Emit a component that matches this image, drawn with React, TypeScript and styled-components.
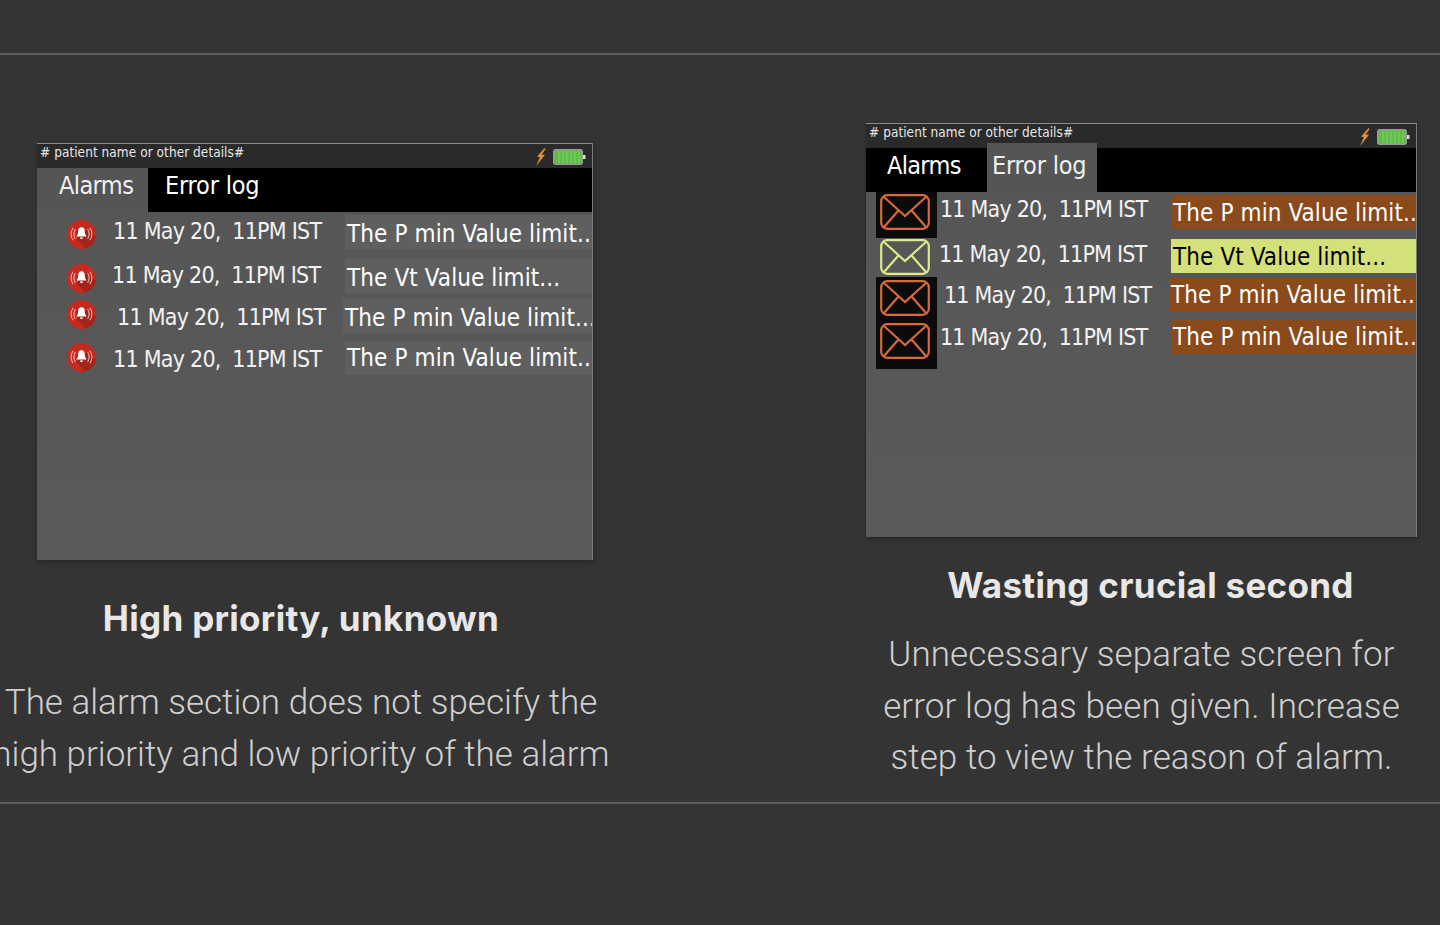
import styled, { createGlobalStyle } from 'styled-components';

const GlobalStyle = createGlobalStyle`
  html, body {
    margin: 0;
    padding: 0;
    background: #343434;
  }
  * {
    box-sizing: border-box;
  }
`;

const Page = styled.div`
  width: 1440px;
  height: 925px;
  overflow: hidden;
  background: #343434;
  padding-top: 53px;
`;

const Section = styled.div`
  height: 751px;
  border-top: 2px solid #5c5c5c;
  border-bottom: 2px solid #5c5c5c;
  display: flex;
  align-items: flex-start;
`;

const Column = styled.div<{ $top: number; $left: number; $width: number }>`
  flex: none;
  width: ${(p) => p.$width}px;
  margin-top: ${(p) => p.$top}px;
  margin-left: ${(p) => p.$left}px;
`;

const Screen = styled.div<{ $height: number }>`
  width: 100%;
  height: ${(p) => p.$height}px;
  background: linear-gradient(180deg, #555 0%, #5a5a5a 100%);
  border-top: 1px solid #8b8b8b;
  border-right: 1px solid #7d7d7d;
  box-shadow: 1px 2px 5px rgba(0, 0, 0, 0.3);
  overflow: hidden;
`;

const StatusBar = styled.div`
  height: 24px;
  background: #2a2a2a;
  display: flex;
  justify-content: space-between;
  padding: 0 6px 0 3px;
  font-family: 'DejaVu Sans Condensed', 'DejaVu Sans', sans-serif;
  font-size: 13.5px;
  line-height: 17px;
  letter-spacing: 0.05px;
  color: #e6e6e6;
`;

const StatusIcons = styled.div`
  display: flex;
  align-items: center;
  gap: 7px;
  padding-top: 2px;
`;

const TabBar = styled.div<{ $lineHeight: number }>`
  height: 44px;
  background: #000;
  display: flex;
  font-family: 'DejaVu Sans Condensed', 'DejaVu Sans', sans-serif;
  font-size: 25px;
  line-height: ${(p) => p.$lineHeight}px;
`;

const Tab = styled.div<{ $active?: boolean; $width: number; $pad: number; $lift?: number; $track: number }>`
  width: ${(p) => p.$width}px;
  padding-left: ${(p) => p.$pad}px;
  color: ${(p) => (p.$active ? '#f0f0f0' : '#fff')};
  background: ${(p) => (p.$active ? '#555' : '#000')};
  ${(p) => (p.$lift ? `margin-top: -${p.$lift}px; padding-top: ${p.$lift}px; height: ${44 + p.$lift}px;` : '')}
  letter-spacing: ${(p) => p.$track}px;
`;

const Row = styled.div<{ $top: number }>`
  display: flex;
  align-items: flex-start;
  height: 34px;
  margin-top: ${(p) => p.$top}px;
  font-family: 'DejaVu Sans Condensed', 'DejaVu Sans', sans-serif;
`;

const BellCell = styled.div<{ $top: number }>`
  flex: none;
  width: 32px;
  margin-left: 28px;
  margin-top: ${(p) => p.$top}px;
  display: flex;
  justify-content: center;
`;

const MailCell = styled.div<{ $top: number; $height: number; $pad: number; $dark: boolean }>`
  flex: none;
  width: 61px;
  margin-left: 10px;
  margin-top: ${(p) => p.$top}px;
  height: ${(p) => p.$height}px;
  padding: ${(p) => p.$pad}px 0 0 4px;
  background: ${(p) => (p.$dark ? '#0b0b0b' : 'transparent')};
  display: flex;
  align-items: flex-start;
`;

const When = styled.div<{ $pad: number; $up: number; $width: number; $track: number }>`
  flex: none;
  width: ${(p) => p.$width}px;
  padding-left: ${(p) => p.$pad}px;
  margin-top: ${(p) => p.$up}px;
  font-size: 23px;
  line-height: 30px;
  color: #f2f2f2;
  white-space: pre;
  letter-spacing: ${(p) => p.$track}px;
`;

const Message = styled.div<{ $tone: 'grey' | 'brown' | 'lime'; $line: number }>`
  flex: 1;
  min-width: 0;
  height: 34px;
  padding-left: 2px;
  font-size: 24px;
  line-height: ${(p) => p.$line}px;
  white-space: nowrap;
  overflow: hidden;
  letter-spacing: 0.1px;
  color: ${(p) => (p.$tone === 'lime' ? '#000' : '#fff')};
  background: ${(p) =>
    p.$tone === 'brown' ? '#8a4a1c' : p.$tone === 'lime' ? '#d4e07a' : '#5f5f5f'};
`;

const Caption = styled.div<{ $shift: number }>`
  display: flex;
  flex-direction: column;
  align-items: center;
  margin-left: ${(p) => p.$shift}px;
`;

const Heading = styled.h2<{ $top: number; $inset: number }>`
  margin: ${(p) => p.$top}px 0 0;
  padding-left: ${(p) => p.$inset}px;
  font-family: 'Inter', sans-serif;
  font-weight: 700;
  font-size: 35px;
  line-height: 44px;
  letter-spacing: 0.3px;
  color: #e8e8e8;
  white-space: nowrap;
`;

const Body = styled.p<{ $top: number; $track: number }>`
  margin: ${(p) => p.$top}px 0 0;
  text-align: center;
  font-family: 'Roboto', sans-serif;
  font-weight: 300;
  font-size: 35px;
  line-height: 51.5px;
  letter-spacing: ${(p) => p.$track}px;
  color: #cfcfcf;
  white-space: nowrap;
`;

function Bolt() {
  return (
    <svg width="11" height="18" viewBox="0 0 11 18">
      <path d="M9.5 0 2 8.8l3 .2L1 18l9-11.2-3.4-.1L10.5 1z" fill="#e2913a" />
    </svg>
  );
}

function Battery() {
  return (
    <svg width="33" height="16" viewBox="0 0 33 16">
      <rect x="0.75" y="0.75" width="28.5" height="14.5" rx="2" fill="#5fbe45" stroke="#9a9a9a" strokeWidth="1.5" />
      <path d="M6 2v12M10 2v12M14 2v12M18 2v12M22 2v12M26 2v12" stroke="#82d068" strokeWidth="1" />
      <rect x="30" y="6" width="2.5" height="4" fill="#ddd" />
    </svg>
  );
}

function BellBadge() {
  return (
    <svg width="29" height="29" viewBox="0 0 30 30">
      <circle cx="15" cy="15" r="15" fill="#c42a20" />
      <path d="M10 20 21 9l8.6 8.6A15 15 0 0 1 19 29.5z" fill="#a32519" />
      <path
        d="M15 7.5c-2.4 0-3.4 2-3.4 4.2 0 2.4-.7 4-1.9 5.3h10.6c-1.2-1.3-1.9-2.9-1.9-5.3 0-2.2-1-4.2-3.4-4.2z"
        fill="#fff"
      />
      <path d="M13.4 18h3.2a1.6 1.6 0 0 1-3.2 0z" fill="#fff" />
      <path
        d="M8.6 9.5c-2 3-2 7 0 10M6.4 8c-2.8 4-2.8 9 0 13M21.4 9.5c2 3 2 7 0 10M23.6 8c2.8 4 2.8 9 0 13"
        fill="none"
        stroke="#f3d0cc"
        strokeWidth="1"
      />
    </svg>
  );
}

function Envelope({ color }: { color: string }) {
  return (
    <svg width="50" height="36" viewBox="0 0 50 36">
      <rect x="1.2" y="1.2" width="47.6" height="33.6" rx="6" fill="none" stroke={color} strokeWidth="2.2" />
      <path
        d="M4 3 25 22 46 3M4 33 18 17M46 33 32 17"
        fill="none"
        stroke={color}
        strokeWidth="2.2"
      />
    </svg>
  );
}

const alarmRows = [
  { top: 3, icon: 5, pad: 16, up: 1, block: 248, line: 38, text: 'The P min Value limit...' },
  { top: 10, icon: 5, pad: 15, up: 1, block: 248, line: 38, text: 'The Vt Value limit...' },
  { top: 6, icon: 1, pad: 20, up: 3, block: 246, line: 38, text: 'The P min Value limit...' },
  { top: 8, icon: 2, pad: 16, up: 3, block: 248, line: 35, text: 'The P min Value limit...' },
];

const errorRows = [
  { top: 3, cell: -3, height: 46, env: 2, tone: 'brown', up: -1, pad: 3, block: 234, line: 37, text: 'The P min Value limit...' },
  { top: 10, cell: 0, height: 36, env: 0, tone: 'lime', up: 0, pad: 2, block: 234, line: 37, text: 'The Vt Value limit...' },
  { top: 5, cell: -1, height: 43, env: 3, tone: 'brown', up: 2, pad: 7, block: 232, line: 35, text: 'The P min Value limit...' },
  { top: 8, cell: 0, height: 49, env: 3, tone: 'brown', up: 2, pad: 3, block: 234, line: 35, text: 'The P min Value limit...' },
] as const;

export default function App() {
  return (
    <Page>
      <GlobalStyle />
      <Section>
        <Column $top={88} $left={37} $width={556}>
          <Screen $height={417}>
            <StatusBar>
              # patient name or other details#
              <StatusIcons>
                <Bolt />
                <Battery />
              </StatusIcons>
            </StatusBar>
            <TabBar $lineHeight={36}>
              <Tab $active $width={111} $pad={22} $track={-0.6}>Alarms</Tab>
              <Tab $width={200} $pad={17} $track={-0.2}>Error log</Tab>
            </TabBar>
            {alarmRows.map((row, i) => (
              <Row key={i} $top={row.top}>
                <BellCell $top={row.icon}>
                  <BellBadge />
                </BellCell>
                <When $pad={row.pad} $up={row.up} $width={row.block} $track={-0.75}>11 May 20,  11PM IST</When>
                <Message $tone="grey" $line={row.line}>{row.text}</Message>
              </Row>
            ))}
          </Screen>
          <Caption $shift={-28}>
            <Heading $top={36} $inset={0}>High priority, unknown</Heading>
            <Body $top={37} $track={0}>
              The alarm section does not specify the
              <br />
              high priority and low priority of the alarm
            </Body>
          </Caption>
        </Column>
        <Column $top={68} $left={273} $width={551}>
          <Screen $height={414}>
            <StatusBar>
              # patient name or other details#
              <StatusIcons>
                <Bolt />
                <Battery />
              </StatusIcons>
            </StatusBar>
            <TabBar $lineHeight={35}>
              <Tab $width={121} $pad={21} $track={-0.7}>Alarms</Tab>
              <Tab $active $width={110} $pad={5} $lift={5} $track={-0.2}>Error log</Tab>
            </TabBar>
            {errorRows.map((row, i) => (
              <Row key={i} $top={row.top}>
                <MailCell $top={row.cell} $height={row.height} $pad={row.env} $dark={row.tone === 'brown'}>
                  <Envelope color={row.tone === 'lime' ? '#d9ec8c' : '#d8693a'} />
                </MailCell>
                <When $pad={row.pad} $up={row.up} $width={row.block} $track={-0.8}>11 May 20,  11PM IST</When>
                <Message $tone={row.tone} $line={row.line}>{row.text}</Message>
              </Row>
            ))}
          </Screen>
          <Caption $shift={0}>
            <Heading $top={26} $inset={18}>Wasting crucial second</Heading>
            <Body $top={22} $track={0.1}>
              Unnecessary separate screen for
              <br />
              error log has been given. Increase
              <br />
              step to view the reason of alarm.
            </Body>
          </Caption>
        </Column>
      </Section>
    </Page>
  );
}
